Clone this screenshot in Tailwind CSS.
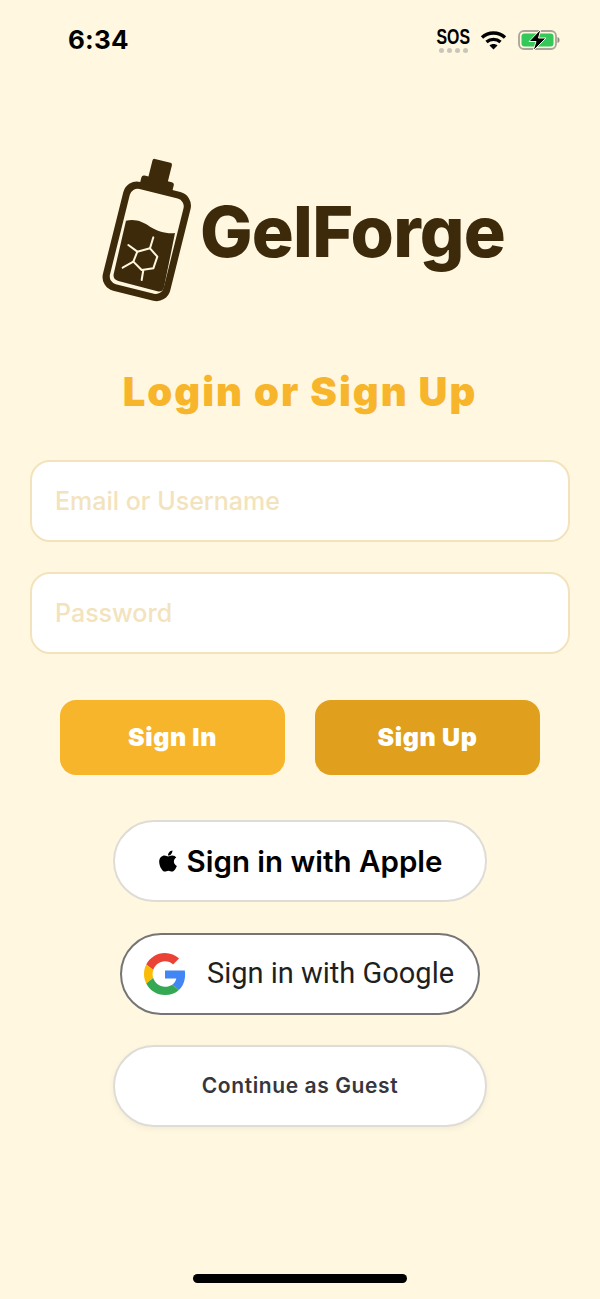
<!DOCTYPE html>
<html lang="en">
<head>
  <meta charset="UTF-8" />
  <meta name="viewport" content="width=device-width, initial-scale=1.0"/>
  <title>GelForge Login</title>
  <script src="https://cdn.jsdelivr.net/npm/@tailwindcss/browser@4"></script>
</head>
<body class="bg-[#fff7e0] font-['Inter',sans-serif]">
  <div class="h-[1299px] w-[600px] flex flex-col items-center">

    <!-- status bar -->
    <div class="w-full h-[80px] flex justify-between pl-[68px] pr-[40px] pt-[25px] items-start">
      <span class="text-[26px] leading-[30px] font-bold tracking-[0.2px] text-black">6:34</span>
      <div class="flex items-start">
        <div class="flex flex-col items-center w-[33px] mt-[3px]">
          <span class="font-['Liberation_Sans',sans-serif] font-bold text-[22px] leading-[18px] text-black scale-x-[0.72]">SOS</span>
          <div class="flex gap-[3px] mt-[2px]">
            <i class="w-[5px] h-[5px] rounded-full bg-[#c9c5b8]"></i>
            <i class="w-[5px] h-[5px] rounded-full bg-[#c9c5b8]"></i>
            <i class="w-[5px] h-[5px] rounded-full bg-[#c9c5b8]"></i>
            <i class="w-[5px] h-[5px] rounded-full bg-[#c9c5b8]"></i>
          </div>
        </div>
        <svg class="ml-[10px] mt-[5px]" width="27" height="20" viewBox="0 0 26 20" fill="none" stroke="#000" stroke-width="3.4">
          <path d="M1.500 7.500C8 1.500 18 1.500 24.500 7.500" />
          <path d="M6 12C10 8.500 16 8.500 20 12" />
          <path d="M13 19.500L9 15.500C11 13.500 15 13.500 17 15.500Z" fill="#000" stroke="none" />
        </svg>
        <svg class="ml-[11px] mt-[3px]" width="42" height="24" viewBox="0 0 42 24">
          <rect x="1" y="3" width="37" height="18" rx="5" fill="none" stroke="#a8a598" stroke-width="1.800" />
          <rect x="3.500" y="5.500" width="32" height="13" rx="3" fill="#34c759" />
          <path d="M39.500 9C41 9.500 41.500 10.500 41.500 12S41 14.500 39.500 15Z" fill="#8d8a7e" />
          <path d="M23 1L11 13.500H18L15 23L28 10H20.500Z" fill="#000" stroke="#fff7e0" stroke-width="1" />
        </svg>
      </div>
    </div>

    <!-- logo -->
    <div class="w-full h-[160px] mt-[70px] flex items-center pl-[90px]">
      <svg width="110" height="160" viewBox="0 0 330 480" class="shrink-0">
        <g transform="rotate(14 170 275)">
          <rect x="128" y="28" width="60" height="90" rx="6" fill="#3d2a0a" />
          <rect x="108" y="84" width="100" height="34" rx="8" fill="#3d2a0a" />
          <rect x="66" y="106" width="208" height="336" rx="42" fill="#3d2a0a" />
          <rect x="87" y="127" width="166" height="294" rx="24" fill="#fff7e0" />
        </g>
        <path d="M108 212C135 205 160 215 180 230C200 243 230 252 255 249L222 412Q218 428 202 424L85 393Q68 388 71 372Z" fill="#3d2a0a" />
        <g fill="none" stroke="#fff7e0" stroke-width="6" stroke-linecap="round" stroke-linejoin="round">
          <path d="M142 305L180 295L202 320L190 355L155 360L130 335Z" />
          <path d="M115 285L142 305" />
          <path d="M190 262L180 295" />
          <path d="M98 353L130 335" />
          <path d="M155 390L160 360" />
        </g>
      </svg>
      <span class="text-[70px] leading-none font-extrabold tracking-[-0.8px] text-[#3d2a0a] mt-[4px]">GelForge</span>
    </div>

    <h1 class="mt-[59px] text-[40px] leading-[46px] font-black tracking-[2px] text-[#f7b52c]">Login or Sign Up</h1>

    <!-- fields -->
    <div class="w-full px-[30px] flex flex-col gap-[30px] mt-[45px]">
      <input placeholder="Email or Username" class="w-full h-[82px] px-[23px] bg-white rounded-[20px] border-2 border-[#f3e3bc] text-[25px] font-medium placeholder:text-[#f3e3bc]" />
      <input placeholder="Password" class="w-full h-[82px] px-[23px] bg-white rounded-[20px] border-2 border-[#f3e3bc] text-[25px] font-medium placeholder:text-[#f3e3bc]" />
    </div>

    <!-- sign in / up -->
    <div class="flex gap-[30px] mt-[46px]">
      <button class="w-[225px] h-[75px] rounded-[16px] bg-[#f7b52c] text-white text-[25px] font-black tracking-[0.6px]">Sign In</button>
      <button class="w-[225px] h-[75px] rounded-[16px] bg-[#e0a01e] text-white text-[25px] font-black tracking-[0.6px]">Sign Up</button>
    </div>

    <!-- social -->
    <button class="mt-[45px] w-[374px] h-[82px] rounded-full bg-white border-2 border-[#dedcd6] flex items-center justify-center gap-[9px] text-[29.500px] font-semibold text-black">
      <svg width="20" height="24" viewBox="0 0 384 512" fill="#000"><path d="M318.700 268.700c-.2-36.700 16.400-64.400 50-84.800-18.800-26.900-47.200-41.700-84.700-44.600-35.500-2.800-74.300 20.700-88.500 20.700-15 0-49.400-19.700-76.400-19.700C63.300 141.200 4 184.800 4 273.500q0 39.300 14.400 81.200c12.800 36.700 59 126.700 107.200 125.200 25.200-.6 43-17.900 75.800-17.900 31.800 0 48.300 17.900 76.400 17.900 48.600-.7 90.400-82.500 102.600-119.300-65.200-30.700-61.700-90-61.700-91.900zm-56.600-164.200c27.300-32.400 24.800-61.900 24-72.500-24.100 1.400-52 16.400-67.900 34.900-17.500 19.800-27.800 44.300-25.600 71.900 26.100 2 49.900-11.400 69.500-34.300z"/></svg>
      Sign in with Apple
    </button>

    <button class="mt-[31px] w-[360px] h-[82px] rounded-full bg-white border-2 border-[#757575] flex items-center pl-[22px] text-[29px] font-[450] text-[#1f1f1f] font-['Roboto',sans-serif]">
      <svg width="42" height="42" viewBox="0 0 48 48">
        <path fill="#EA4335" d="M24 9.500c3.540 0 6.710 1.220 9.210 3.600l6.850-6.850C35.900 2.380 30.470 0 24 0 14.620 0 6.510 5.380 2.560 13.220l7.980 6.190C12.430 13.720 17.740 9.500 24 9.500z"/>
        <path fill="#4285F4" d="M46.980 24.550c0-1.570-.15-3.090-.38-4.550H24v9.020h12.940c-.58 2.960-2.260 5.480-4.780 7.180l7.730 6c4.510-4.180 7.090-10.360 7.090-17.650z"/>
        <path fill="#FBBC05" d="M10.530 28.590c-.48-1.450-.76-2.990-.76-4.590s.27-3.140.76-4.590l-7.980-6.190C.92 16.460 0 20.120 0 24c0 3.880.92 7.540 2.560 10.780l7.970-6.190z"/>
        <path fill="#34A853" d="M24 48c6.480 0 11.930-2.130 15.890-5.810l-7.730-6c-2.150 1.450-4.920 2.300-8.160 2.300-6.260 0-11.570-4.220-13.470-9.910l-7.980 6.190C6.510 42.620 14.620 48 24 48z"/>
      </svg>
      <span class="ml-[21px]">Sign in with Google</span>
    </button>

    <button class="mt-[30px] w-[374px] h-[82px] rounded-full bg-white border-2 border-[#dedcd6] shadow-[0_2px_6px_rgba(0,0,0,0.05)] text-[21px] font-semibold tracking-[0.6px] text-[#36363c]">Continue as Guest</button>

    <!-- home indicator -->
    <div class="mt-auto mb-[16px] w-[214px] h-[9px] rounded-full bg-black"></div>
  </div>
</body>
</html>
